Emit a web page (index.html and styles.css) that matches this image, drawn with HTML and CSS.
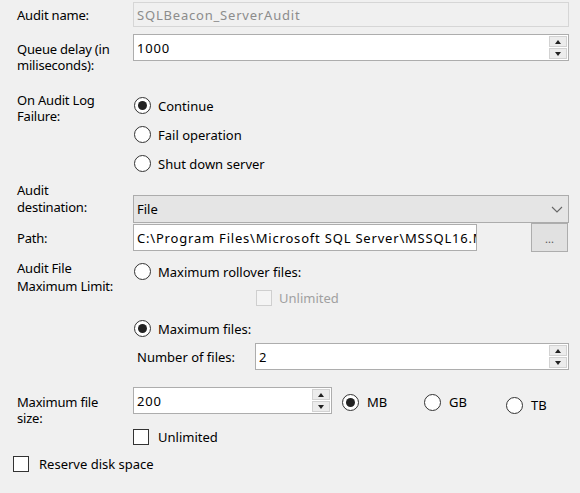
FILE: index.html
```html
<!DOCTYPE html>
<html>
<head>
<meta charset="utf-8">
<link rel="stylesheet" href="styles.css">
</head>
<body>
<div class="form">
  <div class="row r-name">
    <div class="label">Audit name:</div>
    <div class="field readonly"><span class="val">SQLBeacon_ServerAudit</span></div>
  </div>

  <div class="row r-queue">
    <div class="label top7">Queue delay (in<br>miliseconds):</div>
    <div class="field"><span class="val">1000</span><div class="spinner"><span class="up"></span><span class="down"></span></div></div>
  </div>

  <div class="row r-fail">
    <div class="label top1">On Audit Log<br>Failure:</div>
    <div class="group">
      <div class="radio"><span class="dot checked"></span>Continue</div>
      <div class="radio"><span class="dot"></span>Fail operation</div>
      <div class="radio"><span class="dot"></span>Shut down server</div>
    </div>
  </div>

  <div class="row r-dest">
    <div class="label">Audit<br>destination:</div>
    <div class="combo"><span class="val">File</span>
      <svg class="chev" width="12" height="7" viewBox="0 0 12 7"><polyline points="1,1 6,6 11,1" fill="none" stroke="#666" stroke-width="1.1"/></svg>
    </div>
  </div>

  <div class="row r-path">
    <div class="label">Path:</div>
    <div class="pathline">
      <div class="field path"><span class="val">C:\Program Files\Microsoft SQL Server\MSSQL16.MSSQLSERVER</span></div>
      <div class="browse">...</div>
    </div>
  </div>

  <div class="row r-limit">
    <div class="label top2 tall">Audit File<br>Maximum Limit:</div>
    <div class="group">
      <div class="radio"><span class="dot"></span>Maximum rollover files:</div>
      <div class="check disabled sub"><span class="box"></span>Unlimited</div>
      <div class="radio r-maxfiles"><span class="dot checked"></span>Maximum files:</div>
      <div class="numline">
        <div class="numlabel">Number of files:</div>
        <div class="field grow"><span class="val">2</span><div class="spinner"><span class="up"></span><span class="down"></span></div></div>
      </div>
    </div>
  </div>

  <div class="row r-size">
    <div class="label top8">Maximum file<br>size:</div>
    <div class="group">
      <div class="sizeline">
        <div class="field size"><span class="val">200</span><div class="spinner"><span class="up"></span><span class="down"></span></div></div>
        <div class="units">
          <div class="radio unit"><span class="dot checked"></span>MB</div>
          <div class="radio unit"><span class="dot"></span>GB</div>
          <div class="radio unit low"><span class="dot"></span>TB</div>
        </div>
      </div>
      <div class="check c-unl"><span class="box"></span>Unlimited</div>
    </div>
  </div>

  <div class="check reserve"><span class="box"></span>Reserve disk space</div>
</div>
</body>
</html>
```

FILE: styles.css
```css
html, body {
  margin: 0;
  padding: 0;
  background: #f0f0f0;
}
body {
  font-family: "Noto Sans", "Open Sans", sans-serif;
  font-size: 13px;
  line-height: 16px;
  color: #000;
  width: 580px;
  height: 493px;
  overflow: hidden;
}
.form {
  padding: 2px 11px 0 13px;
}
.row {
  display: grid;
  grid-template-columns: 120px 1fr;
}
.label {
  padding-left: 4px;
  white-space: nowrap;
  letter-spacing: -0.2px;
}
.top1 { padding-top: 1px; }
.top2 { padding-top: 2px; }
.top7 { padding-top: 7px; }
.top8 { padding-top: 8px; }
.tall { line-height: 18px; }

.r-name { align-items: center; }
.r-queue { margin-top: 7px; align-items: start; }
.r-fail { margin-top: 18px; align-items: start; }
.r-dest { margin-top: 4px; height: 41px; }
.r-dest .label { align-self: start; line-height: 17px; }
.r-dest .combo { align-self: end; }
.r-path { align-items: center; }
.r-limit { margin-top: 5px; align-items: start; }
.r-size { margin-top: 16px; align-items: start; }

.field {
  box-sizing: border-box;
  height: 27px;
  border: 1px solid #adadad;
  background: #fff;
  display: flex;
  align-items: center;
  padding-left: 3px;
  overflow: hidden;
  white-space: nowrap;
}
.field .val {
  flex: 1;
  min-width: 0;
  overflow: hidden;
  white-space: nowrap;
  letter-spacing: 0.8px;
}
.readonly {
  height: 25px;
  background: #f0f0f0;
  border-color: #d6d6d6;
  color: #8c8c8c;
}
.spinner {
  display: flex;
  flex-direction: column;
  width: 18px;
  height: 23px;
  margin-right: 1px;
  gap: 1px;
  flex: none;
}
.spinner span {
  flex: 1;
  background: #ececec;
  border: 1px solid #d2d2d2;
  display: flex;
  align-items: center;
  justify-content: center;
}
.spinner .up::before {
  content: "";
  border-left: 3.5px solid transparent;
  border-right: 3.5px solid transparent;
  border-bottom: 4px solid #222;
}
.spinner .down::before {
  content: "";
  border-left: 3.5px solid transparent;
  border-right: 3.5px solid transparent;
  border-top: 4px solid #222;
}

.group {
  display: flex;
  flex-direction: column;
}
.radio {
  display: flex;
  align-items: center;
  height: 29px;
  white-space: nowrap;
}
.dot {
  box-sizing: border-box;
  width: 17px;
  height: 17px;
  border: 1px solid #333;
  border-radius: 50%;
  background: #fff;
  margin-left: 1px;
  margin-right: 7px;
  display: flex;
  align-items: center;
  justify-content: center;
  flex: none;
}
.dot.checked::before {
  content: "";
  width: 9px;
  height: 9px;
  border-radius: 50%;
  background: #222;
}

.combo {
  box-sizing: border-box;
  height: 28px;
  border: 1px solid #acacac;
  background: #e5e5e5;
  display: flex;
  align-items: center;
  padding-left: 3px;
  padding-right: 5px;
}
.combo .val { flex: 1; }
.chev { flex: none; }

.pathline {
  display: flex;
  align-items: center;
}
.path {
  width: 344px;
  flex: none;
}
.browse {
  box-sizing: border-box;
  width: 37px;
  height: 29px;
  margin-left: auto;
  margin-right: 1px;
  background: #e1e1e1;
  border: 1px solid #adadad;
  color: #555;
  font-size: 11px;
  text-align: center;
  line-height: 30px;
}

.check {
  display: flex;
  align-items: center;
  height: 16px;
  white-space: nowrap;
}
.box {
  box-sizing: border-box;
  width: 16px;
  height: 16px;
  border: 1px solid #333;
  background: #fff;
  margin-right: 9px;
  flex: none;
}
.check.disabled { color: #a0a0a0; }
.check.disabled .box {
  border-color: #cfcfcf;
  background: #f4f4f4;
  margin-right: 7px;
}
.sub {
  margin-top: 4px;
  margin-left: 123px;
}
.r-maxfiles { margin-top: 8px; }
.numline {
  display: flex;
  align-items: center;
}
.numlabel {
  width: 118px;
  padding-left: 4px;
  flex: none;
  white-space: nowrap;
}
.grow { flex: 1; }

.sizeline {
  display: flex;
  align-items: center;
}
.size {
  width: 199px;
  flex: none;
}
.units {
  display: flex;
  margin-left: 9px;
  margin-top: 6px;
}
.unit {
  width: 82px;
  height: 20px;
}
.unit .dot { margin-right: 8px; }
.unit.low { margin-top: 3px; }
.c-unl { margin-top: 14px; }
.c-unl .box { margin-right: 9px; }
.reserve {
  margin-top: 11px;
}
.reserve .box { margin-right: 10px; }
```
